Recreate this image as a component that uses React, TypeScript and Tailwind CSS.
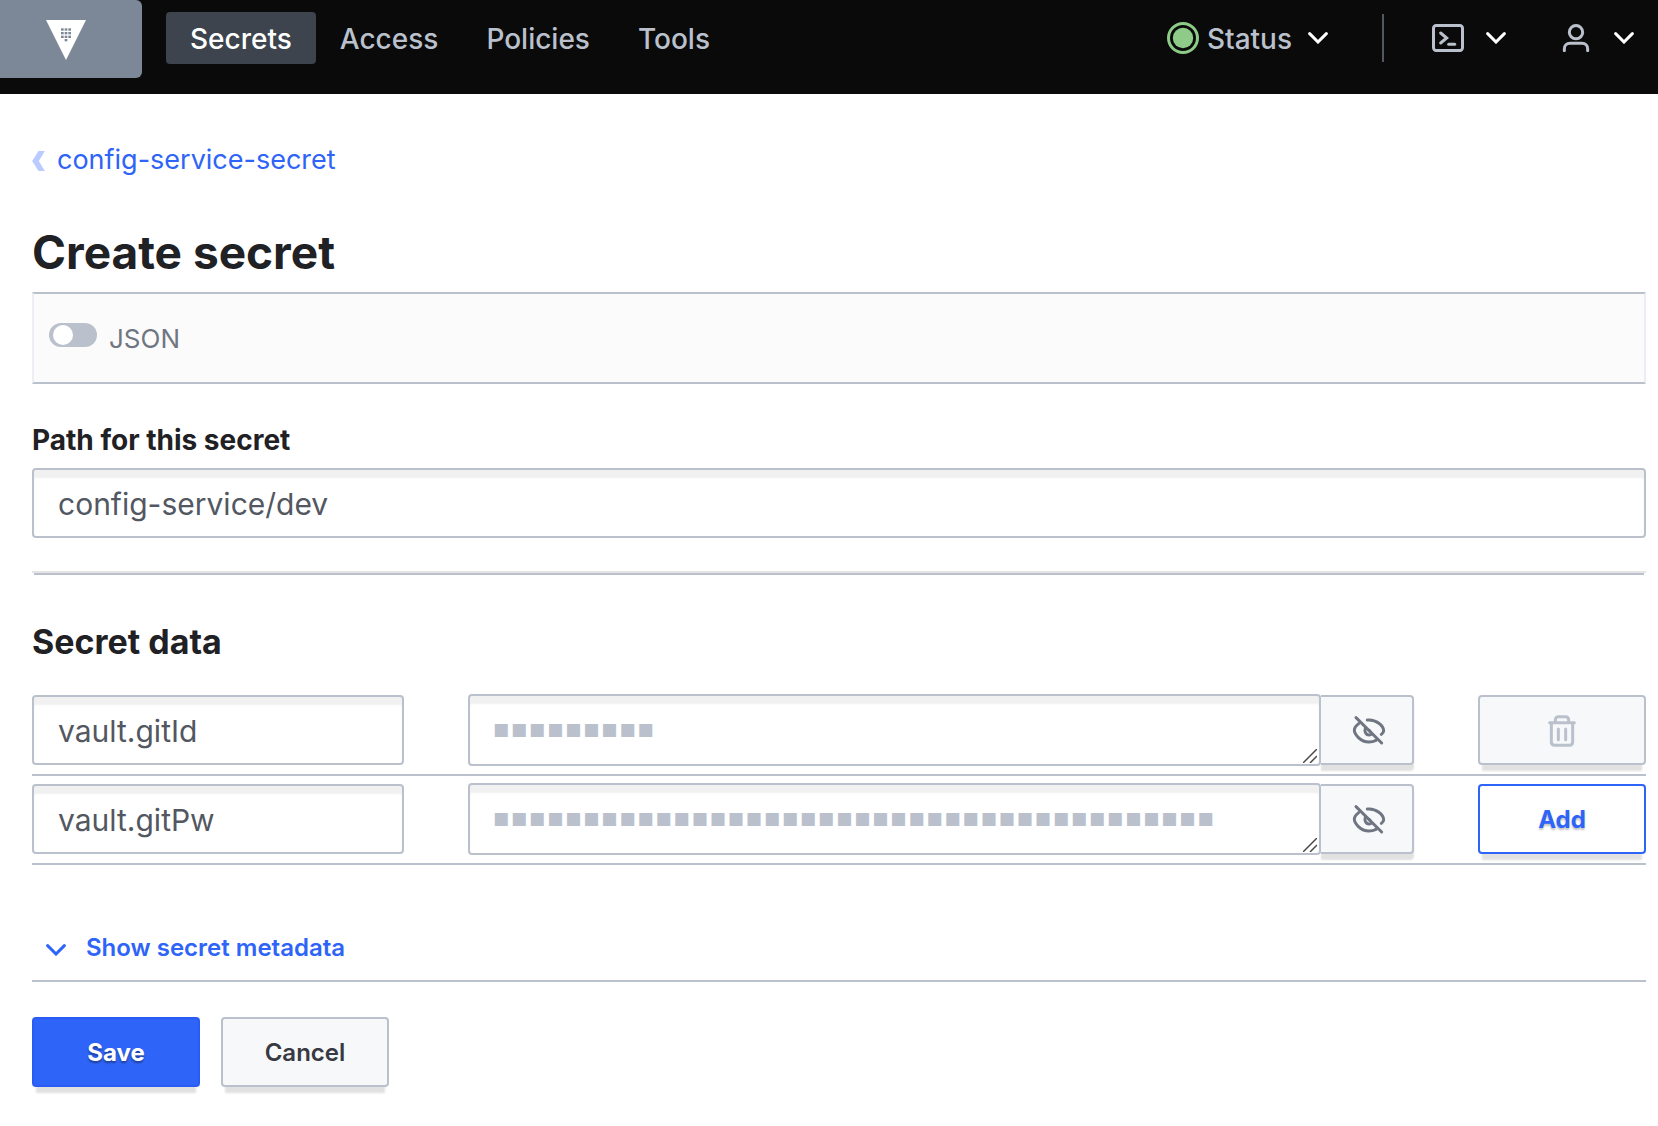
import { useState } from "react";
import type { ReactNode } from "react";
import clsx from "clsx";

const navLinks = [
  { label: "Secrets", active: true },
  { label: "Access", active: false },
  { label: "Policies", active: false },
  { label: "Tools", active: false }
];

const initialRows = [
  { key: "vault.gitId", mask: "◾".repeat(9) },
  { key: "vault.gitPw", mask: "◾".repeat(40) }
];

const fieldClass =
  "w-full rounded border-2 border-[#bac1cc] bg-white text-[#525761] shadow-[inset_0_8px_2px_rgba(10,10,10,0.06)] outline-none focus:border-[#2e64f7]";

const buttonClass = "h-[70px] rounded border-2 pt-0.5 shadow-[0_10px_2px_-4px_rgba(10,10,10,0.12)]";

function Logo() {
  return (
    <svg viewBox="0 0 120 120" className="size-10" aria-hidden="true">
      <path d="M0 0H120L60 120Z" fill="#fff" />
      <g fill="#7c8797">
        {[25, 36, 47].map((y) =>
          [45, 56, 67].map((x) => <rect key={`${x}-${y}`} x={x} y={y} width="8" height="7" />)
        )}
        <rect x="56" y="57" width="8" height="7" />
      </g>
    </svg>
  );
}

function Chevron({ className }: { className?: string }) {
  return (
    <svg viewBox="0 0 60 36" className={clsx("h-3 w-5 shrink-0", className)} fill="none" aria-hidden="true">
      <path d="M5 5L30 30L55 5" stroke="currentColor" strokeWidth="9" strokeLinecap="round" />
    </svg>
  );
}

function ConsoleIcon() {
  return (
    <svg viewBox="0 0 96 84" className="h-7 w-8" fill="none" stroke="currentColor" strokeWidth="9" aria-hidden="true">
      <rect x="4.5" y="4.5" width="87" height="75" rx="8" />
      <path d="M26 27L44 42L26 57" strokeLinecap="round" />
      <path d="M50 61H68" strokeLinecap="round" />
    </svg>
  );
}

function UserIcon() {
  return (
    <svg viewBox="0 0 96 84" className="h-7 w-8" fill="none" stroke="currentColor" strokeWidth="9" aria-hidden="true">
      <circle cx="48" cy="24.5" r="20" />
      <path d="M13 80V75C13 65 20 58 30 58H66C76 58 83 65 83 75V80" strokeLinecap="round" />
    </svg>
  );
}

function HiddenIcon() {
  return (
    <svg viewBox="0 0 108 96" className="h-8 w-9" fill="none" stroke="currentColor" strokeWidth="9" strokeLinecap="round" aria-hidden="true">
      <path d="M15 11L92 87" />
      <path d="M23 29C15 35 10 43 10 49C10 60 28 84 54 84C62 84 69 82 75 79" />
      <path d="M49 18C76 15 98 36 98 50C98 54 95 58 91 61" />
      <path d="M43 43C39 54 46 64 55 63C58 63 60 62 62 60" />
      <path d="M54 49L57 52" />
    </svg>
  );
}

function TrashIcon() {
  return (
    <svg viewBox="0 0 84 96" className="h-8 w-7" fill="none" stroke="currentColor" strokeWidth="9" strokeLinecap="round" aria-hidden="true">
      <path d="M5 23H79" />
      <path d="M22 21V15C22 9 26 5 32 5H52C58 5 62 9 62 15V21" />
      <path d="M10 25V81C10 87 14 91 20 91H64C70 91 74 87 74 81V25" />
      <path d="M31 42V74M53 42V74" />
    </svg>
  );
}

function ResizeGrip() {
  return (
    <svg
      viewBox="0 0 14 14"
      className="pointer-events-none absolute right-1 bottom-[3px] size-3.5"
      fill="none"
      stroke="#4a4a4a"
      strokeWidth="1.5"
      aria-hidden="true"
    >
      <path d="M0 14L14 0M7 14L14 7" />
    </svg>
  );
}

function MenuButton({ label, children }: { label: string; children: ReactNode }) {
  return (
    <button type="button" aria-label={label} className="flex items-center gap-[22px] text-[#bac1cc]">
      {children}
      <Chevron className="text-white" />
    </button>
  );
}

export default function App() {
  const [rows, setRows] = useState(initialRows);
  const [path, setPath] = useState("config-service/dev");

  const updateKey = (index: number, key: string) =>
    setRows(rows.map((row, i) => (i === index ? { ...row, key } : row)));

  return (
    <div className="min-h-screen bg-white font-[Inter,sans-serif] text-[#1f2124]">
      <header className="flex h-[94px] items-start bg-[#0a0a0a] pr-6 text-[28px] font-medium text-[#bac1cc]">
        <a
          href="#home"
          aria-label="Vault"
          className="flex h-[78px] w-[142px] items-center justify-center rounded-r-md bg-[#7c8797] pt-0.5 pr-2.5"
        >
          <Logo />
        </a>
        <div className="mt-3 ml-6 flex h-[52px] flex-1 items-center justify-between">
          <nav className="flex h-full">
            {navLinks.map((link) => (
              <a
                key={link.label}
                href={`#${link.label.toLowerCase()}`}
                className={clsx("flex items-center rounded px-6 pt-0.5", link.active && "bg-[#3d444e] text-white")}
              >
                {link.label}
              </a>
            ))}
          </nav>
          <div className="flex items-center">
            <button type="button" className="flex items-center gap-2">
              <svg viewBox="0 0 32 32" className="size-8" aria-hidden="true">
                <circle cx="16" cy="16" r="14.5" fill="none" stroke="#8ecb88" strokeWidth="3" />
                <circle cx="16" cy="16" r="10.2" fill="#8ecb88" />
              </svg>
              <span className="pt-0.5">Status</span>
              <Chevron className="ml-2 text-white" />
            </button>
            <div className="mr-12 ml-[54px] h-12 w-0.5 bg-[#525761]" />
            <div className="flex gap-[54px]">
              <MenuButton label="Console">
                <ConsoleIcon />
              </MenuButton>
              <MenuButton label="User menu">
                <UserIcon />
              </MenuButton>
            </div>
          </div>
        </div>
      </header>

      <main className="pt-[45px] pr-3 pb-8 pl-8">
        <a href="#config-service-secret" className="flex h-[42px] w-fit items-center gap-3 text-[27px] text-[#2e64f7]">
          <svg viewBox="0 0 38 60" className="mt-0.5 h-5 w-[13px]" fill="#bbcaff" aria-hidden="true">
            <path d="M19 0H38L20 30L38 60H19L0 30Z" />
          </svg>
          config-service-secret
        </a>

        <h1 className="mt-[43px] text-[46px] leading-14 font-bold">Create secret</h1>

        <form onSubmit={(event) => event.preventDefault()}>
          <div className="mt-3 flex h-[92px] items-center border-2 border-x-[#ebeef2] border-y-[#bac1cc] bg-[#fbfbfb] px-[15px]">
            <input
              id="json"
              type="checkbox"
              className="mb-1.5 h-6 w-12 appearance-none rounded-full bg-[#bac1cc] p-0.5 before:ml-0.5 before:block before:size-5 before:rounded-full before:bg-white checked:bg-[#2e64f7] checked:before:ml-[22px]"
            />
            <label htmlFor="json" className="pl-3 text-[26px] text-[#6f7682]">
              JSON
            </label>
          </div>

          <label htmlFor="path" className="mt-9 block text-[28px] leading-10 font-bold">
            Path for this secret
          </label>
          <input
            id="path"
            value={path}
            onChange={(event) => setPath(event.target.value)}
            className={clsx(fieldClass, "mt-2 block h-[70px] px-6 pt-0.5 text-[30px]")}
          />

          <div className="mt-[33px] border-t-2 border-[#e5e5e5]">
            <div className="mx-0.5 h-0.5 bg-[#bac1cc]" />
          </div>

          <h2 className="mt-[45px] mb-[23px] text-[34px] leading-11 font-bold">Secret data</h2>

          {rows.map((row, index) => (
            <div
              key={index}
              className="grid grid-cols-[372fr_946fr_168fr] items-center gap-16 border-b-2 border-[#bac1cc] pt-[7px] pb-2"
            >
              <input
                aria-label="Key"
                value={row.key}
                onChange={(event) => updateKey(index, event.target.value)}
                className={clsx(fieldClass, "h-[70px] px-6 pt-0.5 text-[30px]")}
              />
              <div className="flex items-center">
                <div className="relative flex-1">
                  <textarea
                    aria-label="Value"
                    rows={1}
                    defaultValue={row.mask}
                    spellCheck={false}
                    className={clsx(
                      fieldClass,
                      "block h-[72px] resize-none overflow-hidden px-[22px] py-3 font-['DejaVu_Sans_Mono',monospace] text-[30px] leading-10 text-[#bac1cc]"
                    )}
                  />
                  <ResizeGrip />
                </div>
                <button
                  type="button"
                  aria-label="Show value"
                  className="flex h-[70px] w-[93px] items-center justify-center rounded-r border-2 border-l-0 border-[#bac1cc] bg-[#f7f8fa] pl-1 text-[#6f7682] shadow-[0_6px_2px_rgba(10,10,10,0.12)]"
                >
                  <HiddenIcon />
                </button>
              </div>
              {index < rows.length - 1 ? (
                <button
                  type="button"
                  aria-label="Delete row"
                  className={clsx(buttonClass, "flex items-center justify-center border-[#bac1cc] bg-[#f7f8fa] text-[#bac1cc]")}
                >
                  <TrashIcon />
                </button>
              ) : (
                <button
                  type="button"
                  onClick={() => setRows([...rows, { key: "", mask: "" }])}
                  className={clsx(
                    buttonClass,
                    "border-[#2e64f7] bg-white text-[24px] font-bold text-[#2e64f7] text-shadow-[0_2px_2px_rgba(10,10,10,0.25)]"
                  )}
                >
                  Add
                </button>
              )}
            </div>
          ))}

          <div className="mt-[65px] border-b-2 border-[#bac1cc] pb-3.5 pl-3.5">
            <button type="button" className="flex items-center gap-5 text-[24px] leading-9 font-semibold text-[#2e64f7]">
              <Chevron className="mt-1" />
              Show secret metadata
            </button>
          </div>

          <div className="mt-[35px] flex gap-[21px] text-[24px] font-semibold">
            <button
              type="submit"
              className={clsx(
                buttonClass,
                "w-42 border-[#2a5cf5] bg-[#2e64f7] font-bold text-white text-shadow-[0_2px_2px_rgba(10,10,10,0.4)]"
              )}
            >
              Save
            </button>
            <button type="button" className={clsx(buttonClass, "w-42 border-[#bac1cc] bg-[#f7f8fa] text-[#373a42]")}>
              Cancel
            </button>
          </div>
        </form>
      </main>
    </div>
  );
}
